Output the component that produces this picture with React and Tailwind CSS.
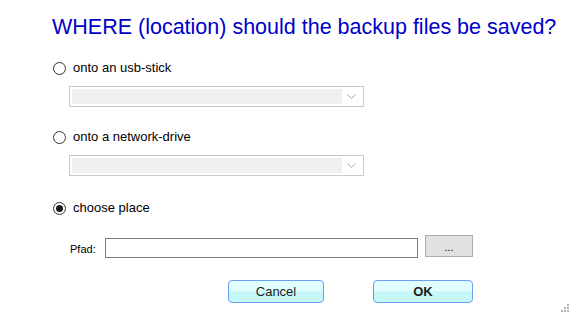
import React from "react";

function Radio({ checked, label }) {
  return (
    <div className="flex items-center h-[16px] pl-[53px]">
      <span className="flex h-[13px] w-[13px] items-center justify-center rounded-full border border-[#333333] bg-white">
        {checked && <span className="h-[7px] w-[7px] rounded-full bg-[#1a1a1a]" />}
      </span>
      <span className="ml-[7px] text-[13px] leading-[16px] text-black">{label}</span>
    </div>
  );
}

function Select({ className }) {
  return (
    <div className={"ml-[69px] flex h-[21px] w-[295px] items-center border border-[#c9c9c9] bg-white px-[2px] " + className}>
      <div className="h-[15px] flex-1 bg-[#efefef]" />
      <div className="flex w-[19px] justify-center">
        <svg width="9" height="5" viewBox="0 0 9 5">
          <path d="M0.5 0.5 L4.5 4.5 L8.5 0.5" fill="none" stroke="#a8a8a8" strokeWidth="1" />
        </svg>
      </div>
    </div>
  );
}

function DlgButton({ children, bold, className }) {
  return (
    <button
      className={
        "h-[23px] rounded-[4px] border border-[#6d9ff0] bg-[linear-gradient(#e0feff_0%,#e0feff_45%,#c6f7f8_55%,#c6f7f8_100%)] text-[13px] leading-[20px] text-[#1c1c1c] " +
        (bold ? "font-bold " : "") +
        className
      }
    >
      {children}
    </button>
  );
}

export default function App() {
  return (
    <div className="relative h-[315px] w-[572px] overflow-hidden bg-white font-['Liberation_Sans',Arial,sans-serif]">
      <div className="pt-[14px] pl-[52px] text-[21.5px] leading-[26px] text-[#0000c8]">
        WHERE (location) should the backup files be saved?
      </div>

      <div className="mt-[20px]">
        <Radio label="onto an usb-stick" />
      </div>
      <Select className="mt-[10px]" />

      <div className="mt-[22px]">
        <Radio label="onto a network-drive" />
      </div>
      <Select className="mt-[10px]" />

      <div className="mt-[24px]">
        <Radio checked label="choose place" />
      </div>

      <div className="mt-[22px] flex items-start pl-[70px]">
        <span className="mt-[3px] w-[35px] text-[11px] leading-[16px] text-black">Pfad:</span>
        <div className="h-[20px] w-[313px] border border-[#7a7a7a] bg-white" />
        <button className="ml-[7px] -mt-[3px] flex h-[22px] w-[48px] items-end justify-center border border-[#adadad] bg-[#e1e1e1] pb-[2px] text-[11px] leading-[14px] text-black">
          ...
        </button>
      </div>

      <div className="mt-[22px] flex pl-[228px]">
        <DlgButton className="w-[96px]">Cancel</DlgButton>
        <DlgButton bold className="ml-[49px] w-[100px]">OK</DlgButton>
      </div>

      <div className="absolute bottom-[3px] right-[3px] grid grid-cols-3 gap-[1px]">
        <span className="h-[2px] w-[2px]" />
        <span className="h-[2px] w-[2px]" />
        <span className="h-[2px] w-[2px] bg-[#b5b5b5]" />
        <span className="h-[2px] w-[2px]" />
        <span className="h-[2px] w-[2px] bg-[#b5b5b5]" />
        <span className="h-[2px] w-[2px] bg-[#b5b5b5]" />
        <span className="h-[2px] w-[2px] bg-[#b5b5b5]" />
        <span className="h-[2px] w-[2px] bg-[#b5b5b5]" />
        <span className="h-[2px] w-[2px] bg-[#b5b5b5]" />
      </div>
    </div>
  );
}
